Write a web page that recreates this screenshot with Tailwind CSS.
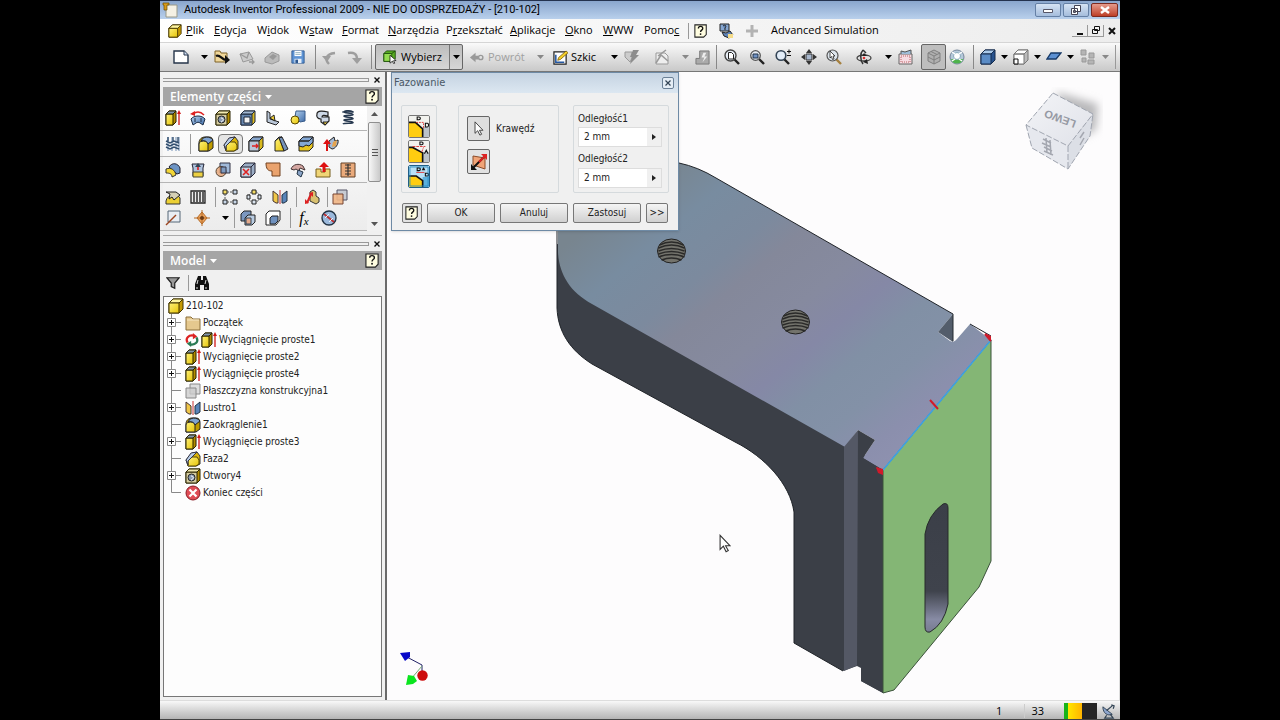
<!DOCTYPE html>
<html lang="pl">
<head>
<meta charset="utf-8">
<title>Autodesk Inventor Professional 2009</title>
<script src="https://cdn.jsdelivr.net/npm/@tailwindcss/browser@4"></script>
</head>
<body class="bg-black">
<svg class="absolute size-0" aria-hidden="true">
  <defs>
    <linearGradient id="yl" x1="0" y1="0" x2="1" y2="1"><stop offset="0" stop-color="#fff27a"/><stop offset="1" stop-color="#e6c408"/></linearGradient>
    <linearGradient id="bl" x1="0" y1="0" x2="1" y2="1"><stop offset="0" stop-color="#b5d2f0"/><stop offset="1" stop-color="#3f6ca8"/></linearGradient>
  </defs>
  <symbol id="down" viewBox="0 0 7 4"><path d="M0 0h7L3.5 4z" fill="currentColor"/></symbol>
  <symbol id="app" viewBox="0 0 16 16"><path d="M4 3h11v12H4z" fill="#f5f1e4" stroke="#998"/><path d="M1 1h6v2H5v5H2V3H1z" fill="#d89a18" stroke="#6b4a00" stroke-width=".7"/></symbol>
  <symbol id="part" viewBox="0 0 16 16"><path d="M1 5l4-4h10v10l-4 4H1z" fill="#c79a00" stroke="#433500"/><path d="M1 5l4-4h10l-4 4z" fill="#fff6a0" stroke="#433500"/><path d="M1 5h10v10H1z" fill="url(#yl)" stroke="#433500"/></symbol>
  <symbol id="new" viewBox="0 0 16 16"><path d="M1 2h10l4 4v8H1z" fill="#fff" stroke="#26354a" stroke-width="1.4"/><path d="M11 2v4h4" fill="#cfe0f5" stroke="#26354a"/></symbol>
  <symbol id="open" viewBox="0 0 16 16"><path d="M1 2h5l1 2h6v9H1z" fill="#f0d79a" stroke="#7d6126"/><path d="M2 7c4-2 6 4 10 4" fill="none" stroke="#111" stroke-width="2.200"/><path d="M11 6l5 5-5 4z" fill="#111"/></symbol>
  <symbol id="gmail" viewBox="0 0 16 16"><path d="M1 5l9-2 4 7-10 3z" fill="#ccc" stroke="#999"/><path d="M1 5l7 4 2-6M10 13h5m-2-2l2 2-2 2" fill="none" stroke="#999" stroke-width="1.3"/></symbol>
  <symbol id="gbox" viewBox="0 0 16 16"><path d="M1 9l7-6 7 3v6l-7 3-7-2z" fill="#bbb" stroke="#999"/><path d="M5 8l4-3 4 2-4 4z" fill="#999"/></symbol>
  <symbol id="save" viewBox="0 0 16 16"><path d="M1 1h14v14H1z" fill="#5d93d4" stroke="#2c578f"/><path d="M4 1h8v6H4z" fill="#fff"/><path d="M5 3h6M5 5h6" stroke="#8ab"/><path d="M4 10h8v5H4z" fill="#e6eef8"/><path d="M5 11h3v4H5z" fill="#2c578f"/></symbol>
  <symbol id="undo" viewBox="0 0 16 16"><path d="M8 15c-4-4-4-10 6-11" fill="none" stroke="#9e9e9e" stroke-width="2.400"/><path d="M1 7h9l-4 6z" fill="#9e9e9e"/></symbol>
  <symbol id="redo" viewBox="0 0 16 16"><path d="M2 4c6-1 9 1 9 6" fill="none" stroke="#9e9e9e" stroke-width="2.400"/><path d="M6 9h10l-5 6z" fill="#9e9e9e"/></symbol>
  <symbol id="select" viewBox="0 0 16 16"><path d="M1 4l3-3h10v9l-3 3H1z" fill="#59ad22" stroke="#1c4b0a"/><path d="M1 4h9v9H1zM10 4l4-3" fill="#93dc50" stroke="#1c4b0a"/><path d="M8 6l7 6-3 .3 1.5 2.7-1.3.6-1.5-2.7L8 15z" fill="#fff" stroke="#000" stroke-width=".8"/></symbol>
  <symbol id="back" viewBox="0 0 16 16"><path d="M1 8l6-5v3h3v4H7v3z" fill="#999"/><circle cx="12.500" cy="8" r="2.300" fill="none" stroke="#999" stroke-width="1.500"/></symbol>
  <symbol id="sketch" viewBox="0 0 16 16"><path d="M1 2h13v13H1z" fill="#fff" stroke="#222" stroke-width="1.300"/><path d="M3 5v8h9" fill="none" stroke="#2457a0" stroke-width="1.600"/><path d="M5 11l1-3 8-7 2 2-8 7z" fill="#f4cf2c" stroke="#755500" stroke-width=".8"/></symbol>
  <symbol id="bolt" viewBox="0 0 16 16"><path d="M1 3h7v6l-2 4-5-5z" fill="#ccc" stroke="#999"/><path d="M9 1h6l-3 5h3L6 15l2-7H6z" fill="#8d8d8d"/></symbol>
  <symbol id="gsk" viewBox="0 0 16 16"><path d="M2 4h9l3 3v8H2z" fill="#eee" stroke="#999"/><path d="M2 14l5-8 7 6M4 7l8-6" fill="none" stroke="#999" stroke-width="1.500"/></symbol>
  <symbol id="gpl" viewBox="0 0 16 16"><path d="M5 1h10v14H1V9h4z" fill="#aaa" stroke="#777"/><path d="M9 3l-2 5h3l-2 5 5-6h-3l2-4z" fill="#eee"/></symbol>
  <symbol id="zall" viewBox="0 0 16 16"><path d="M10 10l5 5" stroke="#222" stroke-width="2.400"/><circle cx="6.500" cy="6.500" r="5.500" fill="#e7edf5" stroke="#444" stroke-width="1.400"/><path d="M4.500 3.500h3l2 2V10h-5z" fill="#fff" stroke="#222"/></symbol>
  <symbol id="zwin" viewBox="0 0 16 16"><path d="M10 10l5 5" stroke="#222" stroke-width="2.400"/><circle cx="6.500" cy="6.500" r="4.800" fill="#e7edf5" stroke="#555" stroke-width="1.300"/><path d="M4 5h5v4H4z" fill="#6f91c4" stroke="#234"/></symbol>
  <symbol id="zpm" viewBox="0 0 16 16"><path d="M9 10l5 5" stroke="#222" stroke-width="2.400"/><circle cx="6" cy="6.500" r="4.800" fill="#e3edf8" stroke="#345" stroke-width="1.600"/><path d="M12 2.500h4M14 .5v4M12 6.500h4" stroke="#111"/></symbol>
  <symbol id="pan" viewBox="0 0 16 16"><path d="M8 0l3 4H5zM8 16l3-4H5zM0 8l4-3v6zM16 8l-4-3v6z" fill="#333"/><path d="M5 5h6v6H5z" fill="#a9b8ce" stroke="#333"/></symbol>
  <symbol id="zsel" viewBox="0 0 16 16"><path d="M10 10l5 5" stroke="#a5803f" stroke-width="2.400"/><circle cx="6.500" cy="6.500" r="5.500" fill="#dde5ec" stroke="#555" stroke-width="1.200"/><path d="M4 2l5 5H7l1 3-1.500.5-1-3L4 9z" fill="#fff" stroke="#222" stroke-width=".8"/></symbol>
  <symbol id="orbit" viewBox="0 0 16 16"><ellipse cx="8" cy="9" rx="7" ry="3" fill="none" stroke="#444" stroke-width="1.300"/><path d="M7 1c-3 3-3 10 0 14M7 1l3 3" fill="none" stroke="#333" stroke-width="1.500"/><path d="M11 10l1 5-5-2z" fill="#222"/><path d="M8 4l3 3H6z" fill="#222"/><circle cx="8" cy="9" r="1.300" fill="#d33"/></symbol>
  <symbol id="look" viewBox="0 0 16 16"><path d="M1 5h13v10H1z" fill="#f7dbe2" stroke="#666"/><path d="M3 5V2l4 1 6-2v4" fill="#9fbdd8" stroke="#555"/><path d="M3 7h9v6H3z" fill="none" stroke="#b66" stroke-dasharray="1 1"/></symbol>
  <symbol id="gcube" viewBox="0 0 16 16"><path d="M8 1l6 3v8l-6 3-6-3V4z" fill="#b0b0b0" stroke="#808080"/><path d="M2 4l6 3 6-3M8 7v8M5 2.500l6 3M2 8l6 3 6-3" fill="none" stroke="#808080"/></symbol>
  <symbol id="wheel" viewBox="0 0 16 16"><circle cx="8" cy="8" r="7" fill="#b5c8d9" stroke="#74869a"/><path d="M2 10c1 6 11 6 12 0z" fill="#4eb34b"/><circle cx="8" cy="7" r="3.500" fill="#fff" stroke="#8ab"/><path d="M3 3l3 2M13 3l-3 2M3 12l3-2M13 12l-3-2" stroke="#fff" stroke-width="1.500"/></symbol>
  <symbol id="bcube" viewBox="0 0 16 16"><path d="M1 5l4-4h10v10l-4 4H1z" fill="#27528e" stroke="#142b4c"/><path d="M1 5l4-4h10l-4 4z" fill="#a9c9ea" stroke="#142b4c"/><path d="M1 5h10v10H1z" fill="#5b8cc6" stroke="#142b4c"/></symbol>
  <symbol id="wcube" viewBox="0 0 16 16"><path d="M1 5l4-4h10v10l-4 4H1z" fill="#bbb" stroke="#777"/><path d="M1 5h10v10H1zM1 5l4-4h10l-4 4z" fill="#fff" stroke="#777"/><path d="M1 10h4v5H1z" fill="#fff" stroke="#111"/></symbol>
  <symbol id="plane" viewBox="0 0 16 16"><path d="M5 4h10l-5 6H1z" fill="#5c90d2" stroke="#163967" stroke-width="1.300"/></symbol>
  <symbol id="ggrid" viewBox="0 0 16 16"><path d="M1 1h5v5H1zM9 4h5v5H9zM2 9h4v4H2zM8 11h6v4H8z" fill="#b5b5b5" stroke="#999"/></symbol>
  <symbol id="help" viewBox="0 0 16 16"><path d="M1 1h13v11l-3 3H1z" fill="#fffde0" stroke="#222" stroke-width="1.200"/><path d="M5 5c0-3 5-3 5 0 0 2-2.500 2-2.500 4" fill="none" stroke="#111" stroke-width="1.500"/><circle cx="7.500" cy="11.500" r="1" fill="#111"/></symbol>
  <symbol id="tutor" viewBox="0 0 16 16"><path d="M2 1h9v7H2z" fill="#86a6d0" stroke="#222"/><path d="M5 3c2-2 4 0 2 2v2M4 9l4 1 4-2 3 4-4 3-5-2z" fill="#5f84b8" stroke="#222"/><path d="M10 11h5v4h-5z" fill="#f5dc89"/></symbol>
  <symbol id="plus" viewBox="0 0 16 16"><path d="M6.500 2h3v4.500H14v3H9.500V14h-3V9.500H2v-3h4.500z" fill="#b3b3b3"/></symbol>
  <symbol id="ext" viewBox="0 0 16 16"><path d="M1 4l3-3h7v11l-3 3H1z" fill="#b28b00" stroke="#2b2400"/><path d="M1 4h7v11H1z" fill="url(#yl)" stroke="#2b2400"/><path d="M1 4l3-3h7L8 4z" fill="#8296ae" stroke="#2b2400"/><path d="M14 15V3" stroke="#d01818" stroke-width="1.300"/><path d="M14 0l2 4h-4z" fill="#d01818"/></symbol>
  <symbol id="rev" viewBox="0 0 16 16"><path d="M1 9c3-4 11-4 14 0l-2 6-3-2c-1-1-3-1-4 0l-3 2z" fill="url(#bl)" stroke="#1b2c44"/><path d="M5 8v4M11 8v4" stroke="#1b2c44"/><path d="M3 4c4-3 8-2 11 1" fill="none" stroke="#d22" stroke-width="1.500"/><path d="M0 4l5-3v5z" fill="#d22"/></symbol>
  <symbol id="hole" viewBox="0 0 16 16"><path d="M1 4l3-3h11v11l-3 3H1z" fill="#b28b00" stroke="#2b2400"/><path d="M1 4h11v11H1z" fill="#d6cda0" stroke="#2b2400"/><path d="M12 4l3-3H4L1 4z" fill="#f3ebb2" stroke="#2b2400"/><circle cx="6.500" cy="9.500" r="3.500" fill="#8b9bb0" stroke="#222"/><path d="M6 8c3 0 3 3 0 4" fill="none" stroke="#fff"/></symbol>
  <symbol id="shell" viewBox="0 0 16 16"><path d="M1 4l3-3h11v11l-3 3H1z" fill="#d8b824" stroke="#1c2738"/><path d="M1 4h11v11H1z" fill="#6686ae" stroke="#1c2738"/><path d="M12 4l3-3H4L1 4z" fill="#a3b9d3" stroke="#1c2738"/><path d="M4 7h6v6H4z" fill="#f3f3f3" stroke="#1c2738"/></symbol>
  <symbol id="rib" viewBox="0 0 16 16"><path d="M2 1l3 2v6l9 3-3 3-9-3z" fill="#bac7d8" stroke="#222"/><path d="M5 8l4-3 1 6z" fill="#f0cf36" stroke="#222"/></symbol>
  <symbol id="loft" viewBox="0 0 16 16"><path d="M6 1h9v10l-5 1-5-5z" fill="url(#bl)" stroke="#385b89"/><circle cx="5" cy="10" r="4" fill="url(#yl)" stroke="#5a4800"/></symbol>
  <symbol id="sweep" viewBox="0 0 16 16"><path d="M2 4c0-4 7-3 11-2v4c-4-1-6-1-6 1h7v4l-4 4-4-3V9C3 9 1 7 2 4z" fill="#cdd8e6" stroke="#222" stroke-width="1.200"/><path d="M8 12h5l-3 3z" fill="#e3c33d" stroke="#222"/></symbol>
  <symbol id="coil" viewBox="0 0 16 16"><path d="M13 2c-4-2-9-1-9 0s9 1 9 2.500-9 0-9 1.500 9 1 9 2.500-9 0-9 1.500 9 1 9 2.500-9 0-10 1.500" fill="none" stroke="#26384f" stroke-width="1.700"/><path d="M2 2h12" stroke="#26384f"/></symbol>
  <symbol id="thread" viewBox="0 0 16 16"><path d="M3 1v14M7 1v14M11 1v14M14 1v14" stroke="#b6c5d8" stroke-width="2"/><path d="M1 5l4 2 4-2 5 2M1 8l4 2 4-2 5 2M1 11l4 2 4-2 5 2M3 1v4M8 1v4M13 1v5" fill="none" stroke="#34506f" stroke-width="1.400"/></symbol>
  <symbol id="fillet" viewBox="0 0 16 16"><path d="M1 15V7c0-4 3-6 6-6h4c3 0 4 2 4 5v6l-4 3z" fill="#bf9b00" stroke="#222"/><path d="M1 15V8c0-4 9-4 9 0v7z" fill="url(#yl)" stroke="#222"/><path d="M3 5c2-5 9-5 12-1l-5 4C9 5 6 4 3 5z" fill="#7fa3d0" stroke="#222"/></symbol>
  <symbol id="chamfer" viewBox="0 0 16 16"><path d="M1 9l6-7 5-1 3 4v8l-4 2H3z" fill="#d8b20a" stroke="#333"/><path d="M3 15v-5l4-4h5l2 3v4l-3 2z" fill="url(#yl)" stroke="#554500"/><path d="M1 9l5-7 6-1-5 5-4 4v4z" fill="#b7cde7" stroke="#334"/></symbol>
  <symbol id="mface" viewBox="0 0 16 16"><path d="M1 5l4-4h10v10l-4 4H1z" fill="#d9ba20" stroke="#222"/><path d="M1 5l4-4h10l-4 4z" fill="#86a5cc" stroke="#222"/><path d="M1 5h10v10H1z" fill="#bac7d8" stroke="#222"/><path d="M4 10h6m-2-2l2 2-2 2" fill="none" stroke="#d22" stroke-width="1.300"/></symbol>
  <symbol id="draft" viewBox="0 0 16 16"><path d="M6 2l3-1 6 12-4 2z" fill="#7592b9" stroke="#222"/><path d="M2 5l4-3 5 13H2z" fill="url(#yl)" stroke="#222"/><path d="M6 2l3-1-3 0-4 4" fill="#b5c8df" stroke="#222"/></symbol>
  <symbol id="split" viewBox="0 0 16 16"><path d="M1 5l4-4h10v10l-4 4H1z" fill="#e6c420" stroke="#222"/><path d="M1 5l4-4h10l-4 4zM1 5h10l4-4v5l-4 4-3-1-3 2-4-1z" fill="#83a7d4" stroke="#222"/></symbol>
  <symbol id="move" viewBox="0 0 16 16"><path d="M6 5l5-4 1 4 3-1c1 4-3 9-6 9l-3-2z" fill="#a4bad5" stroke="#222"/><path d="M10 6l4-2-1 6-4 1z" fill="#e6a44d"/><path d="M4 15V7" stroke="#d11" stroke-width="2"/><path d="M4 3l4 5H0z" fill="#d11"/></symbol>
  <symbol id="thick" viewBox="0 0 16 16"><path d="M4 5c3-5 9-4 11 1v5l-3 1z" fill="#6d94c4" stroke="#223"/><path d="M1 7c5-2 9 1 10 6l-4 2c0-3-2-4-6-4z" fill="#f3d636" stroke="#333"/></symbol>
  <symbol id="emboss" viewBox="0 0 16 16"><path d="M2 2h12l-1 4v8H3V6z" fill="#aec2dc" stroke="#223"/><path d="M3 10h10v5H3z" fill="#ecd042" stroke="#443"/><path d="M8 8V3" stroke="#d11" stroke-width="1.500"/><path d="M8 1l3 4H5z" fill="#345"/></symbol>
  <symbol id="bool" viewBox="0 0 16 16"><path d="M5 1h10v10H5z" fill="#a1bad9" stroke="#334"/><circle cx="6" cy="9.500" r="5" fill="#e5a374" fill-opacity=".8" stroke="#543"/><path d="M6 5h5v6H6z" fill="#7f9bc0" stroke="#334"/></symbol>
  <symbol id="delf" viewBox="0 0 16 16"><path d="M1 5l4-4h10v10l-4 4H1z" fill="#9badc5" stroke="#223"/><path d="M1 5h10v10H1zM11 5l4-4" fill="#c8d4e3" stroke="#223"/><path d="M3 7l6 6M9 7l-6 6" stroke="#d22" stroke-width="1.600"/></symbol>
  <symbol id="patch" viewBox="0 0 16 16"><path d="M1 1h14v13H7V9C3 9 1 7 1 1z" fill="#eaa36e" stroke="#70411f"/></symbol>
  <symbol id="sculpt" viewBox="0 0 16 16"><path d="M1 7c2-5 8-6 12-3l2 4-5-2-1 3-3-2-2 1z" fill="#d5a7a2" stroke="#433"/><path d="M8 8l5 2-2 5-4-3z" fill="#8ba5c8" stroke="#234"/></symbol>
  <symbol id="import" viewBox="0 0 16 16"><path d="M1 7h5v3h4V7h5v8H1z" fill="#f0d576" stroke="#765f1c"/><path d="M9 10V4" stroke="#d11" stroke-width="3"/><path d="M9 0l5 5H4z" fill="#d11"/></symbol>
  <symbol id="zip" viewBox="0 0 16 16"><path d="M1 1h14v14H1z" fill="#eaaa7b" stroke="#634027"/><path d="M8 2v12M5 3h6M5 6h6M5 9h6M5 12h6" stroke="#333" stroke-width="1.200"/></symbol>
  <symbol id="decal" viewBox="0 0 16 16"><path d="M1 12c1-7 12-8 14-3v6H1z" fill="#ecd034" stroke="#333"/><path d="M1 3h10l4 3-6 5-2-3-3 2 1-5z" fill="#d5d0b5" stroke="#222"/></symbol>
  <symbol id="bars" viewBox="0 0 16 16"><path d="M1 2h14v12H1z" fill="#eee" stroke="#222" stroke-width="1.300"/><path d="M4 3v10M7 3v10M10 3v10M13 3v10" stroke="#222" stroke-width="1.400"/></symbol>
  <symbol id="rect" viewBox="0 0 16 16"><path d="M1 1h4v4H1z" fill="#f4dc65" stroke="#222"/><path d="M11 1h4v4h-4zM1 11h4v4H1zM11 11h4v4h-4z" fill="#c8d7e8" stroke="#222"/><path d="M5 3h6M3 5v6M5 13h6" stroke="#555" stroke-dasharray="2 1"/></symbol>
  <symbol id="circ" viewBox="0 0 16 16"><circle cx="8" cy="8" r="5.500" fill="none" stroke="#555" stroke-dasharray="2 1"/><path d="M6 1h4v4H6z" fill="#f4dc65" stroke="#222"/><path d="M1 6h3v4H1zM12 6h3v4h-3zM6 11h4v4H6z" fill="#dce5ef" stroke="#222"/></symbol>
  <symbol id="mirror" viewBox="0 0 16 16"><path d="M1 2l5 4v8l-2 0-3-2z" fill="#f0c748" stroke="#433"/><path d="M15 2l-5 4v8l2 0 3-2z" fill="#5984b9" stroke="#234"/><path d="M8 1v14" stroke="#c33"/></symbol>
  <symbol id="ifeat" viewBox="0 0 16 16"><path d="M6 3l3-2 3 2v4l3 2v4l-3 2-6-3z" fill="#d9c170" stroke="#333"/><path d="M3 14L7 5" stroke="#d22" stroke-width="2"/><path d="M5 4l4-1v5zM1 15v-5l4 4z" fill="#d22"/></symbol>
  <symbol id="planes" viewBox="0 0 16 16"><path d="M5 1h10v10H5z" fill="#c7cbd2" stroke="#556"/><path d="M1 5h10v10H1z" fill="#efb584" fill-opacity=".9" stroke="#743"/></symbol>
  <symbol id="gplanes" viewBox="0 0 16 16"><path d="M5 1h10v10H5z" fill="#ddd" stroke="#888"/><path d="M1 5h10v10H1z" fill="#ccc" fill-opacity=".8" stroke="#888"/></symbol>
  <symbol id="axis" viewBox="0 0 16 16"><path d="M3 1h12v11H3z" fill="#e9edf3" stroke="#567"/><path d="M1 15L11 5" stroke="#9b4520" stroke-width="1.500"/></symbol>
  <symbol id="point" viewBox="0 0 16 16"><path d="M8 2l5 6-5 6-5-6z" fill="#eda55f" stroke="#b66a25"/><path d="M8 0v16M0 8h16" stroke="#b66a25"/><circle cx="8" cy="8" r="2" fill="#6b3912"/></symbol>
  <symbol id="copy" viewBox="0 0 16 16"><path d="M1 4l3-3h7v8l-3 2H1z" fill="#7b97bf" stroke="#222"/><path d="M5 8l3-3h7v7l-3 3H5z" fill="#b9cbe0" stroke="#222"/><path d="M6 8h5v6H6z" fill="#e3a98b" stroke="#345"/></symbol>
  <symbol id="paste" viewBox="0 0 16 16"><path d="M1 4l3-3h11v9l-4 5H1z" fill="#fff" stroke="#222"/><path d="M5 8l2-2h6v5l-3 3H5z" fill="#6f91be" stroke="#222"/></symbol>
  <symbol id="gauge" viewBox="0 0 16 16"><circle cx="8" cy="8" r="7" fill="#9bb9dc" stroke="#234" stroke-width="1.400"/><path d="M3 4l10 8" stroke="#b33" stroke-width="1.800"/><path d="M4 8l4-4M8 12l4-4" stroke="#e9f1fa"/></symbol>
  <symbol id="funnel" viewBox="0 0 16 16"><path d="M1 2h14L10 8v6l-4-2V8z" fill="#999" stroke="#222" stroke-width="1.400"/></symbol>
  <symbol id="bino" viewBox="0 0 16 16"><path d="M4 1h3v4h2V1h3l3 8v6h-5v-5H6v5H1V9z" fill="#111"/><path d="M3 9l1-4M11 9l1-4M3 12v2M12 12v2" stroke="#ddd"/></symbol>
  <symbol id="folder" viewBox="0 0 16 16"><path d="M1 2h5l2 2h7v11H1z" fill="#e5c88e" stroke="#8b6f3a"/><path d="M2 5h12" stroke="#f7e8c5"/></symbol>
  <symbol id="update" viewBox="0 0 16 16"><path d="M3 11C0 6 4 2 10 3" fill="none" stroke="#d22" stroke-width="2.600"/><path d="M9 0l5 4-5 3z" fill="#d22"/><path d="M13 5c3 5-1 9-7 8" fill="none" stroke="#297a53" stroke-width="2.600"/><path d="M7 16l-5-4 5-3z" fill="#297a53"/></symbol>
  <symbol id="end" viewBox="0 0 16 16"><circle cx="8" cy="8" r="7" fill="#df4c55" stroke="#8b1c25"/><path d="M4.500 4.500l7 7M11.500 4.500l-7 7" stroke="#fff" stroke-width="2.200"/></symbol>
  <symbol id="cursor" viewBox="0 0 11 17"><path d="M1 1v13l3-3 2.500 5 2-1L6 10.500h4z" fill="#fff" stroke="#333"/></symbol>
  <symbol id="flip" viewBox="0 0 18 18"><path d="M3 3l12 2v11l-12-4z" fill="#f0a477" stroke="#8b4c29"/><path d="M3 15L15 3" stroke="#111" stroke-width="2"/><path d="M9 9l6-6" stroke="#d22" stroke-width="2"/><path d="M17 1v6l-6-6z" fill="#d22"/><path d="M1 17v-6l6 6z" fill="#111"/></symbol>
  <symbol id="ch1" viewBox="0 0 22 23"><path d="M0 0h22v23H0z" fill="#f2f2ee"/><path d="M15 12h7v11h-7z" fill="#bcc3ca"/><path d="M0 7h7l8 7v9H0z" fill="#ffcd10"/><path d="M0 7h7l8 7v9" fill="none" stroke="#111" stroke-width="1.800"/><path d="M8 7h8v7" fill="none" stroke="#d33" stroke-dasharray="2 1"/><path d="M9 1h2c2 0 2 3 0 3H9zM18 8h2c2 0 2 4 0 4h-2z" fill="none" stroke="#111" stroke-width="1.200"/></symbol>
  <symbol id="ch2" viewBox="0 0 22 23"><path d="M0 0h22v23H0z" fill="#f2f2ee"/><path d="M15 12h7v11h-7z" fill="#bcc3ca"/><path d="M0 7h4l11 6v10H0z" fill="#ffcd10"/><path d="M0 7h4l11 6v10" fill="none" stroke="#111" stroke-width="1.800"/><path d="M4 6h14M14 12l2-5" fill="none" stroke="#d33" stroke-dasharray="3 1"/><path d="M12 1h2c2 0 2 3 0 3h-2zM17 14l2-4 2 4" fill="none" stroke="#111" stroke-width="1.200"/></symbol>
  <symbol id="ch3" viewBox="0 0 22 23"><path d="M0 0h22v23H0z" fill="#b9e1f6"/><path d="M15 12h7v11h-7z" fill="#5ab0dc"/><path d="M0 11h8l7 5v7H0z" fill="#ffcd10"/><path d="M0 11h8l7 5v7" fill="none" stroke="#111" stroke-width="1.800"/><path d="M8 7h9" stroke="#d33"/><path d="M9 2h2c2 0 2 3 0 3H9zM15 4l1-2 1 2zM18 8h2c2 0 2 3 0 3h-2z" fill="none" stroke="#111" stroke-width="1.200"/><path d="M1 1h20v21H1z" fill="none" stroke="#2a8ac0" stroke-width="1"/></symbol>
  <symbol id="t-exp" viewBox="0 0 17 17"><path d="M7.500 0v17M7.500 8.500h10" stroke="#888"/><path d="M3.500 4.500h8v8h-8z" fill="#fff" stroke="#888"/><path d="M5 8.500h5M7.500 6v5" stroke="#111"/></symbol>
  <symbol id="t-leaf" viewBox="0 0 17 17"><path d="M7.500 0v17M7.500 8.500h10" stroke="#888"/></symbol>
  <symbol id="t-last" viewBox="0 0 17 17"><path d="M7.500 0v8.500h10" fill="none" stroke="#888"/></symbol>
</svg>

<div class="mx-auto flex h-screen w-3/4 flex-col overflow-hidden bg-[#f0f0f0] font-['Open_Sans','Noto_Sans',sans-serif] text-xs text-black">

  <header class="flex h-[19px] shrink-0 items-center border-t border-[#24324e] bg-linear-to-b from-[#8aa6cd] to-[#b9d0ec]">
    <svg class="ml-[2px] size-4"><use href="#app"/></svg>
    <h1 class="ml-[6px] grow font-['Roboto','Noto_Sans',sans-serif] text-[11px] whitespace-nowrap">Autodesk Inventor Professional 2009 - NIE DO ODSPRZEDAŻY - [210-102]</h1>
    <div class="flex gap-[2px] pr-[2px]">
      <button aria-label="Minimalizuj" class="flex h-[14px] w-[26px] items-center justify-center rounded-xs border border-[#6580a5] bg-linear-to-b from-[#d6e3f4] to-[#a5bddc]"><svg class="h-2 w-3" viewBox="0 0 12 8"><path d="M1.500 3.500h9v3h-9z" fill="#fff" stroke="#556"/></svg></button>
      <button aria-label="Przywróć" class="flex h-[14px] w-[26px] items-center justify-center rounded-xs border border-[#6580a5] bg-linear-to-b from-[#d6e3f4] to-[#a5bddc]"><svg class="size-3" viewBox="0 0 12 12"><path d="M4.500 1.500h6v6h-6zM1.500 4.500h6v6h-6z" fill="#fff" stroke="#445"/><path d="M3.500 6.500h2v2h-2z" fill="none" stroke="#445"/></svg></button>
      <button aria-label="Zamknij" class="flex h-[14px] w-[27px] items-center justify-center rounded-xs border border-[#7c2a20] bg-linear-to-b from-[#e59a8c] to-[#bd3d25]"><svg class="h-2 w-3" viewBox="0 0 12 8"><path d="M2 1l8 6M10 1L2 7" stroke="#fff" stroke-width="2.400"/></svg></button>
    </div>
  </header>

  <nav class="flex h-[23px] shrink-0 items-center bg-linear-to-r from-white via-[#f6f6f6] to-[#ededed] pl-2 text-[11px] whitespace-nowrap">
    <svg class="mr-1 size-[14px]"><use href="#part"/></svg>
    <button class="w-7 text-left"><u>P</u>lik</button>
    <button class="w-[43px] text-left"><u>E</u>dycja</button>
    <button class="w-[42px] text-left">W<u>i</u>dok</button>
    <button class="w-[43px] text-left">W<u>s</u>taw</button>
    <button class="w-[46px] text-left"><u>F</u>ormat</button>
    <button class="w-[58px] text-left"><u>N</u>arzędzia</button>
    <button class="w-16 text-left">P<u>r</u>zekształć</button>
    <button class="w-[55px] text-left"><u>A</u>plikacje</button>
    <button class="w-[38px] text-left"><u>O</u>kno</button>
    <button class="w-[41px] text-left"><u>W</u>WW</button>
    <button class="w-11 text-left">Pomo<u>c</u></button>
    <div class="h-4 w-px bg-[#999]"></div>
    <button aria-label="Pomoc" class="flex w-6 justify-center"><svg class="size-[14px]"><use href="#help"/></svg></button>
    <button aria-label="Samouczek" class="flex w-[26px] justify-center"><svg class="size-4"><use href="#tutor"/></svg></button>
    <button aria-label="Dodaj" class="flex w-[26px] justify-center"><svg class="size-4"><use href="#plus"/></svg></button>
    <button class="ml-[6px] text-left">Advanced Simulation</button>
    <div class="ml-auto flex items-center">
      <button aria-label="Minimalizuj dokument" class="flex h-3 w-4 items-end justify-center border-r border-b border-[#999]"><svg class="size-2" viewBox="0 0 8 8"><path d="M1 6h6" stroke="#111" stroke-width="2"/></svg></button>
      <button aria-label="Przywróć dokument" class="flex h-3 w-4 items-center justify-center border-r border-b border-[#999]"><svg class="size-[10px]" viewBox="0 0 10 10"><path d="M3.500 1.500h5v4h-5zM1.500 4.500h5v4h-5z" fill="#f2f2f2" stroke="#111"/></svg></button>
      <button aria-label="Zamknij dokument" class="flex h-3 w-4 items-center justify-center"><svg class="size-2" viewBox="0 0 8 8"><path d="M1 1l6 6M7 1L1 7" stroke="#111" stroke-width="2"/></svg></button>
    </div>
  </nav>

  <div class="flex h-[30px] shrink-0 items-center border-t border-b border-t-[#d5d5d5] border-b-[#777] bg-linear-to-b from-[#fafafa] to-[#c9c9c9] pl-2 text-[11px] whitespace-nowrap">
    <button aria-label="Nowy" class="flex w-[26px] justify-center"><svg class="size-4"><use href="#new"/></svg></button>
    <button aria-label="Nowy, opcje" class="flex w-5 justify-center"><svg class="h-1 w-[7px]"><use href="#down"/></svg></button>
    <button aria-label="Otwórz" class="flex w-4 justify-center"><svg class="size-4"><use href="#open"/></svg></button>
    <button aria-label="Wyślij" class="flex w-[34px] justify-center"><svg class="size-4"><use href="#gmail"/></svg></button>
    <button aria-label="Element" class="flex w-4 justify-center"><svg class="size-4"><use href="#gbox"/></svg></button>
    <button aria-label="Zapisz" class="flex w-[35px] justify-center"><svg class="size-[14px]"><use href="#save"/></svg></button>
    <div class="h-6 w-px bg-[#888]"></div>
    <button aria-label="Cofnij" class="flex w-[25px] justify-center"><svg class="size-4"><use href="#undo"/></svg></button>
    <button aria-label="Ponów" class="flex w-[26px] justify-center"><svg class="size-4"><use href="#redo"/></svg></button>
    <div class="mr-[3px] ml-1 h-6 w-px bg-[#888]"></div>
    <div class="flex h-[26px] w-[88px] rounded-xs border border-[#666] bg-linear-to-b from-[#bdbdbd] to-[#d6d6d6]">
      <button class="flex w-[73px] items-center justify-center gap-1"><svg class="size-[14px]"><use href="#select"/></svg>Wybierz</button>
      <button aria-label="Wybierz, opcje" class="flex grow items-center justify-center border-l border-[#777]"><svg class="h-1 w-[7px]"><use href="#down"/></svg></button>
    </div>
    <button class="ml-[6px] flex w-[62px] items-center gap-1 text-[#a0a0a0]"><svg class="size-[15px]"><use href="#back"/></svg>Powrót</button>
    <button aria-label="Powrót, opcje" class="flex w-[18px] justify-center text-[#888]"><svg class="h-1 w-[7px]"><use href="#down"/></svg></button>
    <button class="ml-1 flex w-[53px] items-center gap-[3px]"><svg class="size-[15px]"><use href="#sketch"/></svg>Szkic</button>
    <button aria-label="Szkic, opcje" class="flex w-4 justify-center"><svg class="h-1 w-[7px]"><use href="#down"/></svg></button>
    <button aria-label="Aktualizuj" class="flex w-5 justify-center"><svg class="size-4"><use href="#bolt"/></svg></button>
    <button aria-label="Szkic 3D" class="flex w-[39px] justify-center"><svg class="size-4"><use href="#gsk"/></svg></button>
    <button aria-label="Szkic 3D, opcje" class="flex w-2 justify-center text-[#888]"><svg class="h-1 w-[7px]"><use href="#down"/></svg></button>
    <button aria-label="Parametry" class="flex w-[27px] justify-center"><svg class="size-[15px]"><use href="#gpl"/></svg></button>
    <div class="mr-[3px] h-6 w-px bg-[#888]"></div>
    <button aria-label="Pokaż wszystko" class="flex w-6 justify-center"><svg class="size-4"><use href="#zall"/></svg></button>
    <button aria-label="Okno powiększenia" class="flex w-[26px] justify-center"><svg class="size-4"><use href="#zwin"/></svg></button>
    <button aria-label="Powiększ" class="flex w-[26px] justify-center"><svg class="size-4"><use href="#zpm"/></svg></button>
    <button aria-label="Przesuń" class="flex w-[25px] justify-center"><svg class="size-4"><use href="#pan"/></svg></button>
    <button aria-label="Powiększ wybrane" class="flex w-[26px] justify-center"><svg class="size-4"><use href="#zsel"/></svg></button>
    <button aria-label="Obróć" class="flex w-[34px] justify-center"><svg class="size-4"><use href="#orbit"/></svg></button>
    <button aria-label="Obróć, opcje" class="flex w-[14px] justify-center"><svg class="h-1 w-[7px]"><use href="#down"/></svg></button>
    <button aria-label="Patrz na" class="flex w-[22px] justify-center"><svg class="size-4"><use href="#look"/></svg></button>
    <button aria-label="ViewCube" class="ml-1 flex h-[26px] w-[25px] items-center justify-center rounded-xs border border-[#666] bg-[#bebebe]"><svg class="size-4"><use href="#gcube"/></svg></button>
    <button aria-label="Koła sterujące" class="flex w-[22px] justify-center"><svg class="size-4"><use href="#wheel"/></svg></button>
    <div class="mr-1 ml-[5px] h-6 w-px bg-[#888]"></div>
    <button aria-label="Cieniowanie" class="flex w-5 justify-center"><svg class="size-4"><use href="#bcube"/></svg></button>
    <button aria-label="Cieniowanie, opcje" class="flex w-3 justify-center"><svg class="h-1 w-[7px]"><use href="#down"/></svg></button>
    <button aria-label="Rzut" class="flex w-[22px] justify-center"><svg class="size-4"><use href="#wcube"/></svg></button>
    <button aria-label="Rzut, opcje" class="flex w-[11px] justify-center"><svg class="h-1 w-[7px]"><use href="#down"/></svg></button>
    <button aria-label="Cień" class="flex w-[22px] justify-center"><svg class="size-4"><use href="#plane"/></svg></button>
    <button aria-label="Cień, opcje" class="flex w-[11px] justify-center"><svg class="h-1 w-[7px]"><use href="#down"/></svg></button>
    <button aria-label="Komponenty" class="flex w-6 justify-center"><svg class="size-4"><use href="#ggrid"/></svg></button>
    <button aria-label="Komponenty, opcje" class="flex w-[10px] justify-center text-[#888]"><svg class="h-1 w-[7px]"><use href="#down"/></svg></button>
    <div class="ml-[5px] h-6 w-px bg-[#999]"></div>
  </div>

  <div class="flex min-h-0 grow">
    <aside class="flex w-[227px] shrink-0 flex-col border-r-2 border-[#6a6a6a] pr-[3px] pl-[3px]">
      <section class="shrink-0">
        <div class="flex h-[15px] items-center gap-[3px]">
          <div class="h-[4px] grow border-y border-r border-[#999]"></div>
          <button aria-label="Zamknij panel" class="mr-px flex size-[9px] items-center justify-center"><svg class="size-[6px]" viewBox="0 0 6 6"><path d="M.5.500l5 5M5.500.500l-5 5" stroke="#111" stroke-width="1.400"/></svg></button>
        </div>
        <div class="flex h-[19px] items-center justify-between bg-[#a5a5a5] pr-[2px] pl-[7px] text-white">
          <button class="flex items-center gap-1 font-semibold">Elementy części <svg class="h-1 w-[7px]"><use href="#down"/></svg></button>
          <button aria-label="Pomoc panelu"><svg class="block size-[15px]"><use href="#help"/></svg></button>
        </div>
        <div class="flex">
          <div class="grow bg-linear-to-b from-white to-[#ececec]">
            <div class="-ml-[3px] grid h-[25px] grid-cols-[repeat(8,25px)] place-items-center border-b border-[#b5b5b5]">
              <button aria-label="Wyciągnięcie proste"><svg class="block size-4"><use href="#ext"/></svg></button>
              <button aria-label="Obrót"><svg class="block size-4"><use href="#rev"/></svg></button>
              <button aria-label="Otwór"><svg class="block size-4"><use href="#hole"/></svg></button>
              <button aria-label="Skorupa"><svg class="block size-4"><use href="#shell"/></svg></button>
              <button aria-label="Żebro"><svg class="block size-4"><use href="#rib"/></svg></button>
              <button aria-label="Wyciągnięcie złożone"><svg class="block size-4"><use href="#loft"/></svg></button>
              <button aria-label="Przeciągnięcie"><svg class="block size-4"><use href="#sweep"/></svg></button>
              <button aria-label="Zwój"><svg class="block size-4"><use href="#coil"/></svg></button>
            </div>
            <div class="-ml-[3px] flex h-[26px] items-center border-b border-[#b5b5b5]">
              <button aria-label="Gwint" class="flex w-[25px] justify-center"><svg class="size-4"><use href="#thread"/></svg></button>
              <div class="mr-[2px] ml-[5px] h-5 w-px bg-[#999]"></div>
              <button aria-label="Zaokrąglenie" class="flex w-[25px] justify-center"><svg class="size-4"><use href="#fillet"/></svg></button>
              <button aria-label="Faza" class="flex h-5 w-[25px] items-center justify-center rounded-sm border border-[#777] bg-[#e5e5e5]"><svg class="size-4"><use href="#chamfer"/></svg></button>
              <button aria-label="Przesuń powierzchnię" class="flex w-[25px] justify-center"><svg class="size-4"><use href="#mface"/></svg></button>
              <button aria-label="Pochylenie" class="flex w-[25px] justify-center"><svg class="size-4"><use href="#draft"/></svg></button>
              <button aria-label="Podziel" class="flex w-[25px] justify-center"><svg class="size-4"><use href="#split"/></svg></button>
              <button aria-label="Przesuń bryłę" class="flex w-[25px] justify-center"><svg class="size-4"><use href="#move"/></svg></button>
            </div>
            <div class="-ml-[3px] grid h-[26px] grid-cols-[repeat(8,25px)] place-items-center border-b border-[#b5b5b5]">
              <button aria-label="Pogrubienie"><svg class="block size-4"><use href="#thick"/></svg></button>
              <button aria-label="Wytłoczenie"><svg class="block size-4"><use href="#emboss"/></svg></button>
              <button aria-label="Połącz"><svg class="block size-4"><use href="#bool"/></svg></button>
              <button aria-label="Usuń powierzchnię"><svg class="block size-4"><use href="#delf"/></svg></button>
              <button aria-label="Powierzchnia graniczna"><svg class="block size-4"><use href="#patch"/></svg></button>
              <button aria-label="Rzeźbienie"><svg class="block size-4"><use href="#sculpt"/></svg></button>
              <button aria-label="Importuj"><svg class="block size-4"><use href="#import"/></svg></button>
              <button aria-label="Zszyj"><svg class="block size-4"><use href="#zip"/></svg></button>
            </div>
            <div class="-ml-[3px] border-b border-[#b5b5b5] pt-[3px] pb-[2px]">
              <div class="flex h-[21px] items-center">
                <button aria-label="Kalkomania" class="flex w-[25px] justify-center"><svg class="size-4"><use href="#decal"/></svg></button>
                <button aria-label="Kratka" class="flex w-[25px] justify-center"><svg class="size-4"><use href="#bars"/></svg></button>
                <div class="mr-[2px] ml-[5px] h-5 w-px bg-[#999]"></div>
                <button aria-label="Szyk prostokątny" class="flex w-[23px] justify-center"><svg class="size-4"><use href="#rect"/></svg></button>
                <button aria-label="Szyk kołowy" class="flex w-[26px] justify-center"><svg class="size-4"><use href="#circ"/></svg></button>
                <button aria-label="Lustro" class="flex w-[25px] justify-center"><svg class="size-4"><use href="#mirror"/></svg></button>
                <div class="mx-1 h-5 w-px bg-[#999]"></div>
                <button aria-label="Wstaw iFeature" class="flex w-[22px] justify-center"><svg class="size-4"><use href="#ifeat"/></svg></button>
                <div class="mx-1 h-5 w-px bg-[#999]"></div>
                <button aria-label="Płaszczyzna" class="flex w-4 justify-center"><svg class="size-4"><use href="#planes"/></svg></button>
              </div>
              <div class="flex h-[21px] items-center">
                <button aria-label="Oś" class="flex w-[25px] justify-center"><svg class="size-4"><use href="#axis"/></svg></button>
                <button aria-label="Punkt" class="flex w-[33px] justify-center"><svg class="size-4"><use href="#point"/></svg></button>
                <button aria-label="Punkt, opcje" class="flex w-[14px] justify-center"><svg class="h-1 w-[7px]"><use href="#down"/></svg></button>
                <div class="mr-[3px] ml-[2px] h-5 w-px bg-[#999]"></div>
                <button aria-label="Komponent pochodny" class="flex w-5 justify-center"><svg class="size-4"><use href="#copy"/></svg></button>
                <button aria-label="Wklej element" class="flex w-[30px] justify-center"><svg class="size-4"><use href="#paste"/></svg></button>
                <div class="mx-[2px] h-5 w-px bg-[#999]"></div>
                <button aria-label="Parametry modelu" class="w-[22px] font-['Liberation_Serif',serif] text-base leading-5 italic">f<sub class="text-[11px]">x</sub></button>
                <button aria-label="Tolerancje" class="flex w-[28px] justify-center"><svg class="size-4"><use href="#gauge"/></svg></button>
              </div>
            </div>
          </div>
          <div class="flex w-[15px] shrink-0 flex-col items-center bg-[#f1f1f1]">
            <button aria-label="Przewiń w górę" class="flex h-4 items-center"><svg class="h-1 w-[7px] rotate-180 text-[#555]"><use href="#down"/></svg></button>
            <div class="flex h-[60px] w-[13px] items-center justify-center rounded-xs border border-[#8f8f8f] bg-linear-to-r from-[#f7f7f7] to-[#c9c9c9]"><svg class="h-[7px] w-[6px]" viewBox="0 0 6 7"><path d="M0 .5h6M0 3.500h6M0 6.500h6" stroke="#555"/></svg></div>
            <button aria-label="Przewiń w dół" class="mt-auto flex h-[14px] items-center"><svg class="h-1 w-[7px] text-[#555]"><use href="#down"/></svg></button>
          </div>
        </div>
      </section>

      <section class="mt-1 flex min-h-0 grow flex-col border-t border-[#aaa]">
        <div class="flex h-[15px] shrink-0 items-center gap-[3px]">
          <div class="h-[4px] grow border-y border-r border-[#999]"></div>
          <button aria-label="Zamknij przeglądarkę" class="mr-px flex size-[9px] items-center justify-center"><svg class="size-[6px]" viewBox="0 0 6 6"><path d="M.5.500l5 5M5.500.500l-5 5" stroke="#111" stroke-width="1.400"/></svg></button>
        </div>
        <div class="flex h-[19px] shrink-0 items-center justify-between bg-[#a5a5a5] pr-[2px] pl-[7px] text-white">
          <button class="flex items-center gap-1 font-semibold">Model <svg class="h-1 w-[7px]"><use href="#down"/></svg></button>
          <button aria-label="Pomoc przeglądarki"><svg class="block size-[15px]"><use href="#help"/></svg></button>
        </div>
        <div class="flex h-[26px] shrink-0 items-center pl-[3px]">
          <button aria-label="Filtr"><svg class="block size-[14px]"><use href="#funnel"/></svg></button>
          <div class="mr-[5px] ml-2 h-4 w-px bg-[#999]"></div>
          <button aria-label="Znajdź"><svg class="block size-4"><use href="#bino"/></svg></button>
        </div>
        <div class="mb-[3px] grow border border-[#777] bg-[#fdfdfd] font-['DejaVu_Sans_Condensed','DejaVu_Sans',sans-serif] text-[10px] whitespace-nowrap text-[#222]">
          <div class="flex h-[17px] items-center gap-[2px] pl-1"><svg class="size-4"><use href="#part"/></svg>210-102</div>
          <ul>
            <li class="flex h-[17px] items-center"><button aria-label="Rozwiń Początek"><svg class="block size-[17px]"><use href="#t-exp"/></svg></button><svg class="mr-[2px] ml-1 size-4"><use href="#folder"/></svg>Początek</li>
            <li class="flex h-[17px] items-center"><button aria-label="Rozwiń Wyciągnięcie proste1"><svg class="block size-[17px]"><use href="#t-exp"/></svg></button><svg class="mr-[2px] ml-1 size-[14px]"><use href="#update"/></svg><svg class="mr-[2px] size-4"><use href="#ext"/></svg>Wyciągnięcie proste1</li>
            <li class="flex h-[17px] items-center"><button aria-label="Rozwiń Wyciągnięcie proste2"><svg class="block size-[17px]"><use href="#t-exp"/></svg></button><svg class="mr-[2px] ml-1 size-4"><use href="#ext"/></svg>Wyciągnięcie proste2</li>
            <li class="flex h-[17px] items-center"><button aria-label="Rozwiń Wyciągnięcie proste4"><svg class="block size-[17px]"><use href="#t-exp"/></svg></button><svg class="mr-[2px] ml-1 size-4"><use href="#ext"/></svg>Wyciągnięcie proste4</li>
            <li class="flex h-[17px] items-center"><svg class="size-[17px]"><use href="#t-leaf"/></svg><svg class="mr-[2px] ml-1 size-4"><use href="#gplanes"/></svg>Płaszczyzna konstrukcyjna1</li>
            <li class="flex h-[17px] items-center"><button aria-label="Rozwiń Lustro1"><svg class="block size-[17px]"><use href="#t-exp"/></svg></button><svg class="mr-[2px] ml-1 size-4"><use href="#mirror"/></svg>Lustro1</li>
            <li class="flex h-[17px] items-center"><svg class="size-[17px]"><use href="#t-leaf"/></svg><svg class="mr-[2px] ml-1 size-4"><use href="#fillet"/></svg>Zaokrąglenie1</li>
            <li class="flex h-[17px] items-center"><button aria-label="Rozwiń Wyciągnięcie proste3"><svg class="block size-[17px]"><use href="#t-exp"/></svg></button><svg class="mr-[2px] ml-1 size-4"><use href="#ext"/></svg>Wyciągnięcie proste3</li>
            <li class="flex h-[17px] items-center"><svg class="size-[17px]"><use href="#t-leaf"/></svg><svg class="mr-[2px] ml-1 size-4"><use href="#chamfer"/></svg>Faza2</li>
            <li class="flex h-[17px] items-center"><button aria-label="Rozwiń Otwory4"><svg class="block size-[17px]"><use href="#t-exp"/></svg></button><svg class="mr-[2px] ml-1 size-4"><use href="#hole"/></svg>Otwory4</li>
            <li class="flex h-[17px] items-center"><svg class="size-[17px]"><use href="#t-last"/></svg><svg class="mr-[2px] ml-1 size-4"><use href="#end"/></svg>Koniec części</li>
          </ul>
        </div>
      </section>
    </aside>

    <main class="relative min-w-0 grow overflow-hidden border-r border-[#ddd] bg-[#fdfcfd]">
      <svg class="block h-full w-full" viewBox="387 72 732 628" preserveAspectRatio="xMinYMin meet" role="img" aria-label="Model części 210-102">
        <defs>
          <linearGradient id="top" gradientUnits="userSpaceOnUse" x1="620" y1="200" x2="870" y2="500">
            <stop offset="0" stop-color="#78858f"/><stop offset=".14" stop-color="#788ca0"/><stop offset=".28" stop-color="#7c8a9e"/><stop offset=".36" stop-color="#84889a"/><stop offset=".5" stop-color="#868a9f"/><stop offset=".6" stop-color="#8588a6"/><stop offset=".7" stop-color="#8190a5"/><stop offset=".8" stop-color="#8391a7"/><stop offset=".9" stop-color="#8b8fad"/><stop offset="1" stop-color="#9092b0"/>
          </linearGradient>
          <linearGradient id="slot" x1="0" y1="0" x2="0" y2="1"><stop offset="0" stop-color="#3b3f48"/><stop offset=".68" stop-color="#3f434c"/><stop offset=".9" stop-color="#878ba4"/><stop offset="1" stop-color="#777b90"/></linearGradient>
          <linearGradient id="cube" x1="0" y1="0" x2="1" y2="1"><stop offset="0" stop-color="#f3f4f7"/><stop offset="1" stop-color="#e0e2e9"/></linearGradient>
          <filter id="soft"><feGaussianBlur stdDeviation="4"/></filter>
          <g id="bore">
            <ellipse rx="14" ry="12" fill="#73736c" stroke="#222"/>
            <path d="M-12-6Q0-12 12-6M-13-3Q0-9 13-3M-13 0Q0 -5 13 0M-13 3Q0-2 13 3M-13 6Q0 1 13 6M-10 9Q0 5 10 9" fill="none" stroke="#2a2a29" stroke-width="1.600"/>
          </g>
        </defs>
        <path d="M557 244V308C558 332 570 350 592 364L735 442C765 457 790 484 794 512V643L843 671L857 666L861 668V681L883 693V470L845 440L600 250z" fill="#3b3f47"/>
        <path d="M558 200V252C559 274 570 292 592 304L845 447L858 430L875 440L863 458L883 470L991 340L970 324L957 339Q954 343 950 341L938 332L953 314L716 178Q698 167 679 163L600 150z" fill="url(#top)"/>
        <path d="M557 230V308C558 332 570 350 592 364L735 442C765 457 790 484 794 512V643L843 671M716 178L953 314M679 163Q698 167 716 178M970 324L991 336" fill="none" stroke="#1f2328"/>
        <path d="M953 314V342L938 332z" fill="#535d6b"/>
        <path d="M953 314V341" stroke="#252a30"/>
        <path d="M844 447L858 430V665L844 671z" fill="#545865"/>
        <path d="M858 430L875 440L863 458L883 470V693L861 681V667L857 665z" fill="#3b3f47"/>
        <path d="M883 470L991 340V561L979 587L894 690L883 693z" fill="#84b675" stroke="#3b523a"/>
        <path d="M925 534Q928 515 943 504Q948 502 948 508V604Q944 624 930 632Q925 633 925 627z" fill="url(#slot)" stroke="#262b2a"/>
        <path d="M883 470L991 340" stroke="#3ea2e5" stroke-width="1.500"/>
        <path d="M985 334l6 7M930 400l8 9M877 468l5 5" stroke="#d01a2a" stroke-width="2"/>
        <path d="M876 467l7 2v6l-5-2zM985 333l6 3v6z" fill="#d01a2a"/>
        <use href="#bore" x="671.500" y="251"/>
        <use href="#bore" x="795.500" y="322"/>

        <path d="M1056 92L1098 104L1096 130L1074 140z" fill="#b9b9bb" filter="url(#soft)"/>
        <path d="M1053 93L1093 114L1068 146L1026 125z" fill="url(#cube)"/>
        <path d="M1026 125L1068 146V169L1032 148z" fill="#e6e8ee"/>
        <path d="M1068 146L1093 114L1090 136L1068 169z" fill="#dcdfe6"/>
        <path d="M1053 93L1093 114L1068 146L1026 125zM1026 125L1032 148L1068 169L1090 136L1093 114M1068 146V169" fill="none" stroke="#a0a5b0" stroke-dasharray="6 2"/>
        <text transform="translate(1060 119) rotate(200)" text-anchor="middle" y="4" font-family="Liberation Sans" font-weight="bold" font-size="11" fill="#9699a3">LEWO</text>
        <path d="M1043 139l8 4M1042 143l9 4M1044 147l8 4M1044 151l9 4M1046 138l1 15M1050 140l1 15M1080 138l4-6M1080 145l4-7" stroke="#a4a7b0" stroke-width="1.500"/>

        <path d="M422 677V665L405 656" fill="none" stroke="#226"/>
        <path d="M422 666L411 679" stroke="#7a7"/>
        <path d="M400 653l10-1v5l-5 4z" fill="#0808c8"/>
        <path d="M408 675l6 1 3 5-4 3-7 1z" fill="#0ae51f"/>
        <circle cx="422.500" cy="675.500" r="5.200" fill="#cd0d0d"/>
        <use href="#cursor" x="719" y="534" width="12" height="19"/>
      </svg>

      <form class="absolute top-0 left-1 flex h-[159px] w-[288px] flex-col border border-[#6e8aa5] bg-[#f0f0f0] font-['DejaVu_Sans_Condensed','DejaVu_Sans',sans-serif] text-[10px] text-[#222] shadow">
        <div class="flex h-5 items-center justify-between bg-linear-to-b from-[#c5d3e2] to-[#dce7f1] pr-1 pl-[2px] text-[11px] text-[#4a5866]">
          <h2>Fazowanie</h2>
          <button type="button" aria-label="Zamknij okno" class="flex size-3 items-center justify-center rounded-xs border border-[#6b8096] bg-[#e5edf5]"><svg class="size-[6px]" viewBox="0 0 6 6"><path d="M.5.500l5 5M5.500.500l-5 5" stroke="#345" stroke-width="1.200"/></svg></button>
        </div>
        <div class="flex grow items-start pt-3 pl-[9px]">
          <div class="flex h-[88px] w-9 flex-col items-center justify-center gap-[2px] rounded-xs border border-[#d5dadd] pt-1">
            <button type="button" aria-label="Odległość"><svg class="block h-[23px] w-[22px] rounded-xs border border-[#777]"><use href="#ch1"/></svg></button>
            <button type="button" aria-label="Odległość i kąt"><svg class="block h-[23px] w-[22px] rounded-xs border border-[#777]"><use href="#ch2"/></svg></button>
            <button type="button" aria-label="Dwie odległości"><svg class="block h-[23px] w-[22px] rounded-xs border border-[#1f5f88]"><use href="#ch3"/></svg></button>
          </div>
          <div class="ml-[21px] flex h-[88px] w-[101px] flex-col gap-2 rounded-xs border border-[#d5dadd] pt-[10px] pl-2">
            <div class="flex items-center gap-[6px]">
              <button type="button" id="edge" class="flex h-[25px] w-[23px] items-center justify-center rounded-xs border border-[#666] bg-[#dedede]"><svg class="h-[15px] w-[10px]"><use href="#cursor"/></svg></button>
              <label for="edge">Krawędź</label>
            </div>
            <button type="button" aria-label="Odwróć" class="flex h-[25px] w-[23px] items-center justify-center rounded-xs border border-[#666] bg-[#e2e2e2]"><svg class="size-[18px]"><use href="#flip"/></svg></button>
          </div>
          <div class="ml-[14px] flex h-[88px] w-24 flex-col rounded-xs border border-[#d5dadd] pt-[5px] pl-1">
            <label for="d1" class="leading-4">Odległość1</label>
            <div class="flex h-5 w-[84px] border border-[#ddd]">
              <input id="d1" value="2 mm" class="w-0 grow bg-white pl-[5px]"><button type="button" aria-label="Opcje odległości 1" class="flex w-[14px] items-center justify-center"><svg class="h-[6px] w-1" viewBox="0 0 4 6"><path d="M0 0l4 3-4 3z" fill="#222"/></svg></button>
            </div>
            <label for="d2" class="mt-1 leading-4">Odległość2</label>
            <div class="mt-px flex h-5 w-[84px] border border-[#ddd]">
              <input id="d2" value="2 mm" class="w-0 grow bg-white pl-[5px]"><button type="button" aria-label="Opcje odległości 2" class="flex w-[14px] items-center justify-center"><svg class="h-[6px] w-1" viewBox="0 0 4 6"><path d="M0 0l4 3-4 3z" fill="#222"/></svg></button>
            </div>
          </div>
        </div>
        <div class="mb-[7px] flex h-5 gap-[5px] pl-[10px]">
          <button type="button" aria-label="Pomoc okna" class="flex w-5 items-center justify-center rounded-xs border border-[#777] bg-[#e3e3e3]"><svg class="size-[14px]"><use href="#help"/></svg></button>
          <button type="button" class="w-[68px] rounded-xs border border-[#777] bg-linear-to-b from-[#f5f5f5] to-[#d0d0d0]">OK</button>
          <button type="button" class="w-[68px] rounded-xs border border-[#777] bg-linear-to-b from-[#f5f5f5] to-[#d0d0d0]">Anuluj</button>
          <button type="button" class="w-[68px] rounded-xs border border-[#777] bg-linear-to-b from-[#f5f5f5] to-[#d0d0d0]">Zastosuj</button>
          <button type="button" class="w-[22px] rounded-xs border border-[#777] bg-linear-to-b from-[#f5f5f5] to-[#d0d0d0]">&gt;&gt;</button>
        </div>
      </form>
    </main>
  </div>

  <footer class="flex h-5 shrink-0 items-center justify-end border-t border-b border-t-[#ddd] border-b-[#444] bg-linear-to-b from-[#f8f8f8] to-[#b5b5b5] pt-[2px] pr-1 text-[11px]">
    <span class="mr-[22px]">1</span>
    <span class="border-l border-[#ccc] pl-[6px]">33</span>
    <div class="ml-5 flex h-4 w-[33px]"><div class="w-1 bg-[#18b318]"></div><div class="w-[14px] bg-linear-to-r from-[#ffe600] to-[#ffb400]"></div><div class="grow bg-[#252525]"></div></div>
    <svg class="ml-1 size-[15px]" viewBox="0 0 16 16"><path d="M2 3c0 7 5 10 10 8z" fill="#8ea5cc" stroke="#345"/><path d="M6 7l6-5M6 12l-2 3h9l-3-4M11 1l3 1-1 3" fill="none" stroke="#345" stroke-width="1.300"/></svg>
  </footer>
</div>
</body>
</html>
